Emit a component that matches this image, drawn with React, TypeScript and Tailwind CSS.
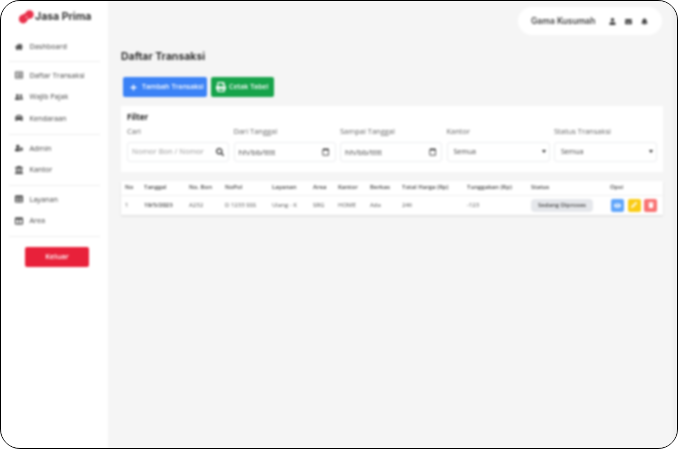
import React from "react";
import { FaBell, FaCar, FaEnvelope, FaEye, FaHome, FaLandmark, FaPencilAlt, FaPlus, FaPrint, FaSearch, FaTable, FaTrash, FaUser, FaUserCog, FaUserFriends, FaRegCalendar, FaColumns, FaRegListAlt } from "react-icons/fa";

const Item = ({ icon, label }: { icon: React.ReactNode; label: string }) => (
  <div className="flex h-[21.5px] items-center gap-[6.5px] pl-[14px] text-[#444]">
    <span className="flex w-[8px] justify-center text-[8px] text-[#333]">{icon}</span>
    <span className="text-[7.25px]">{label}</span>
  </div>
);

const Divider = ({ className }: { className: string }) => <div className={`mx-[8px] h-px bg-[#eeeeee] ${className}`} />;

const DateField = () => (
  <div className="flex h-[20px] items-center justify-between rounded-[3px] border border-[#eceef0] bg-white px-[4px] text-[8px] text-[#444]">
    <span>hh/bb/tttt</span>
    <FaRegCalendar className="mr-[1px] text-[7.5px] text-[#222]" />
  </div>
);

const SelectField = () => (
  <div className="relative h-[20px]">
    <select className="block h-[20px] w-full appearance-none rounded-[3px] border border-[#eceef0] bg-white pl-[6px] text-[7px] text-[#444]">
      <option>Semua</option>
    </select>
    <span className="absolute right-[4px] top-[8px] border-x-[2.5px] border-t-[3px] border-x-transparent border-t-[#333]" />
  </div>
);

const Label = ({ children }: { children: React.ReactNode }) => (
  <div className="mb-[5px] text-[7.5px] leading-[11px] text-[#666]">{children}</div>
);

const headers = ["No", "Tanggal", "No. Bon", "NoPol", "Layanan", "Area", "Kantor", "Berkas", "Total Harga (Rp)", "Tunggakan (Rp)", "Status", "Opsi"];

export default function App() {
  return (
    <div className="h-[449px] w-[678px] overflow-hidden bg-white font-['Open_Sans',sans-serif]">
      <div className="h-full w-full overflow-hidden rounded-[20px] border-[1.5px] border-black">
        <div className="flex h-full w-full blur-[0.8px]">
          <aside className="w-[107px] shrink-0 bg-white">
            <div className="flex h-[29px] items-center gap-[1px] pl-[18px] pt-[2px]">
              <svg width="15" height="14" viewBox="0 0 15 14">
                <circle cx="4.2" cy="9" r="4.4" fill="#e8304a" />
                <circle cx="10.5" cy="4.5" r="4.2" fill="#e8304a" />
                <circle cx="7" cy="6.5" r="3.2" fill="#e8304a" />
                <circle cx="7.5" cy="7" r="0.8" fill="#fff" />
              </svg>
              <span className="font-['Inter',sans-serif] text-[10.5px] font-bold text-[#333]">Jasa Prima</span>
            </div>
            <div className="mt-[6px]">
              <Item icon={<FaHome />} label="Dashboard" />
              <Divider className="mb-[3px] mt-[3px]" />
              <Item icon={<FaRegListAlt />} label="Daftar Transaksi" />
              <Item icon={<FaUserFriends />} label="Wajib Pajak" />
              <Item icon={<FaCar />} label="Kendaraan" />
              <Divider className="mb-[2.5px] mt-[5px]" />
              <Item icon={<FaUserCog />} label="Admin" />
              <Item icon={<FaLandmark />} label="Kantor" />
              <Divider className="mb-[3px] mt-[4px]" />
              <Item icon={<FaTable />} label="Layanan" />
              <Item icon={<FaColumns />} label="Area" />
              <Divider className="mb-[10px] mt-[4.5px]" />
              <div className="flex justify-center pl-[5px]">
                <button className="h-[20px] w-[64px] rounded-[2px] bg-[#e8213a] text-[7.5px] font-semibold text-white">Keluar</button>
              </div>
            </div>
          </aside>

          <main className="flex-1 border-r-[4px] border-[#efefef] bg-[#f5f5f5] pl-[13px] pt-[6px]">
            <div className="flex w-[541px] justify-end">
              <div className="flex h-[28px] w-[144px] items-center rounded-full bg-white pl-[13px] text-[#444]">
                <span className="font-['Inter',sans-serif] text-[8.5px] font-semibold text-[#444]">Gama Kusumah</span>
                <div className="ml-[14px] flex items-center gap-[9px] text-[7px]">
                  <FaUser />
                  <FaEnvelope />
                  <FaBell />
                </div>
              </div>
            </div>

            <h1 className="mt-[14px] font-['Inter',sans-serif] text-[10.5px] font-bold leading-[16px] text-[#333]">Daftar Transaksi</h1>

            <div className="mt-[12px] flex gap-[4px] pl-[2px]">
              <button className="flex h-[20px] w-[84px] items-center gap-[5px] rounded-[2px] bg-[#3b82f6] pl-[7px] text-[7px] font-semibold text-white">
                <FaPlus className="text-[7px]" />
                Tambah Transaksi
              </button>
              <button className="flex h-[20px] w-[63px] items-center gap-[3px] rounded-[2px] bg-[#16a34a] pl-[5px] text-[7px] font-semibold text-white">
                <FaPrint className="text-[10px]" />
                Cetak Tabel
              </button>
            </div>

            <section className="mt-[9px] h-[66px] w-[542px] bg-white px-[6px] pt-[5px]">
              <div className="text-[8px] font-bold leading-[11px] text-[#222]">Filter</div>
              <div className="mt-[4px] grid grid-cols-[102px_102px_102px_103px_103px] gap-x-[4.5px]">
                <div>
                  <Label>Cari</Label>
                  <div className="flex h-[20px] items-center justify-between rounded-[3px] border border-[#eceef0] px-[4px] text-[7.5px] text-[#999]">
                    <span>Nomor Bon / Nomor</span>
                    <FaSearch className="text-[8px] text-[#333]" />
                  </div>
                </div>
                <div>
                  <Label>Dari Tanggal</Label>
                  <DateField />
                </div>
                <div>
                  <Label>Sampai Tanggal</Label>
                  <DateField />
                </div>
                <div>
                  <Label>Kantor</Label>
                  <SelectField />
                </div>
                <div>
                  <Label>Status Transaksi</Label>
                  <SelectField />
                </div>
              </div>
            </section>

            <table className="mt-[9px] w-[542px] table-fixed bg-white text-left text-[6px] text-[#555] shadow-[0_1px_2px_rgba(0,0,0,0.12)]">
              <colgroup>
                <col className="w-[19px]" />
                <col className="w-[45px]" />
                <col className="w-[36px]" />
                <col className="w-[47px]" />
                <col className="w-[41px]" />
                <col className="w-[25px]" />
                <col className="w-[32px]" />
                <col className="w-[32px]" />
                <col className="w-[65px]" />
                <col className="w-[64px]" />
                <col className="w-[79px]" />
                <col />
              </colgroup>
              <thead>
                <tr className="h-[14px] border-b border-[#f1f1f1]">
                  {headers.map((h) => (
                    <th key={h} className="overflow-hidden whitespace-nowrap pl-[4px] font-semibold text-[#444]">{h}</th>
                  ))}
                </tr>
              </thead>
              <tbody>
                <tr className="h-[20px]">
                  <td className="pl-[4px]">1</td>
                  <td className="pl-[4px] font-semibold text-[#333]">19/5/2023</td>
                  <td className="pl-[4px]">A232</td>
                  <td className="pl-[4px]">D 1233 SSS</td>
                  <td className="pl-[4px]">Ulang - K</td>
                  <td className="pl-[4px]">SRG</td>
                  <td className="pl-[4px]">HOME</td>
                  <td className="pl-[4px]">Ada</td>
                  <td className="pl-[4px]">246</td>
                  <td className="pl-[4px]">-123</td>
                  <td className="pl-[4px]">
                    <span className="inline-block h-[13px] w-[62px] rounded-[4px] bg-[#e5e7eb] text-center font-semibold leading-[13px] text-[#444]">Sedang Diproses</span>
                  </td>
                  <td className="pl-[5px]">
                    <div className="flex gap-[3.5px]">
                      <span className="flex h-[13px] w-[13px] items-center justify-center rounded-[2px] bg-[#60a5fa] text-[7px] text-white"><FaEye /></span>
                      <span className="flex h-[13px] w-[13px] items-center justify-center rounded-[2px] bg-[#facc15] text-[6px] text-white"><FaPencilAlt /></span>
                      <span className="flex h-[13px] w-[13px] items-center justify-center rounded-[2px] bg-[#f87171] text-[6px] text-white"><FaTrash /></span>
                    </div>
                  </td>
                </tr>
              </tbody>
            </table>
          </main>
        </div>
      </div>
    </div>
  );
}
